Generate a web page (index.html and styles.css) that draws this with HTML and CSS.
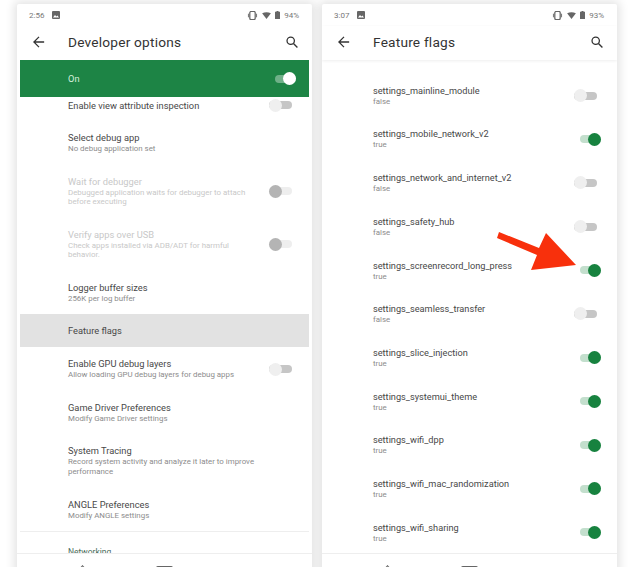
FILE: index.html
```html
<!DOCTYPE html>
<html lang="en">
<head>
    <meta charset="UTF-8">
    <meta name="viewport" content="width=device-width, initial-scale=1.0">
    <title>Developer options and Feature flags</title>
    <link rel="stylesheet" href="styles.css">
</head>
<body>
    <div class="screens">
        <div class="phone">
            <div class="statusbar">
                <span class="clock">2:56</span>
                <svg class="photo-icon" viewBox="0 0 8 8"><rect width="8" height="8" rx="1" fill="#666"/><path d="M1 6.5 3 4l1.4 1.6L5.4 4.6 7 6.5z" fill="#fff"/></svg>
                <span class="status-right">
                    <svg class="vibrate-icon" viewBox="0 0 12 10"><rect x="3" y="0.5" width="6" height="9" rx="1.5" fill="none" stroke="#666" stroke-width="1.4"/><path d="M1.5 3v4M10.5 3v4" stroke="#666"/></svg>
                    <svg class="wifi-icon" viewBox="0 0 10 8"><path d="M0 1.5Q5-1 10 1.5L5 8z" fill="#666"/></svg>
                    <svg class="battery-icon" viewBox="0 0 5 8"><path d="M1.5 0h2v.8H5V8H0V.8h1.5z" fill="#666"/></svg>
                    <span class="pct">94%</span>
                </span>
            </div>
            <div class="appbar">
                <svg class="back-icon" viewBox="0 0 14 14"><path d="M13 7H1.5M7 1 1 7l6 6" fill="none" stroke="#333" stroke-width="1.5"/></svg>
                <h1 class="title">Developer options</h1>
                <svg class="search-icon" viewBox="0 0 14 14"><circle cx="5.5" cy="5.5" r="4.3" fill="none" stroke="#333" stroke-width="1.5"/><path d="m8.7 8.7 4.6 4.6" stroke="#333" stroke-width="1.6"/></svg>
            </div>
            <div class="main-switch">
                <span>On</span>
                <span class="toggle toggle-white"></span>
            </div>
            <div class="list list-dev">
                <div class="row row-first"><div class="texts"><div class="name">Enable view attribute inspection</div></div><span class="toggle toggle-off"></span></div>
                <div class="row"><div class="texts"><div class="name">Select debug app</div><div class="sub">No debug application set</div></div></div>
                <div class="row row-tall disabled"><div class="texts"><div class="name">Wait for debugger</div><div class="sub">Debugged application waits for debugger to attach before executing</div></div><span class="toggle toggle-dim"></span></div>
                <div class="row row-tall disabled"><div class="texts"><div class="name">Verify apps over USB</div><div class="sub">Check apps installed via ADB/ADT for harmful behavior.</div></div><span class="toggle toggle-dim"></span></div>
                <div class="row"><div class="texts"><div class="name">Logger buffer sizes</div><div class="sub">256K per log buffer</div></div></div>
                <div class="row row-flags"><div class="texts"><div class="name">Feature flags</div></div></div>
                <div class="row"><div class="texts"><div class="name">Enable GPU debug layers</div><div class="sub">Allow loading GPU debug layers for debug apps</div></div><span class="toggle toggle-off"></span></div>
                <div class="row"><div class="texts"><div class="name">Game Driver Preferences</div><div class="sub">Modify Game Driver settings</div></div></div>
                <div class="row row-tall"><div class="texts"><div class="name">System Tracing</div><div class="sub">Record system activity and analyze it later to improve performance</div></div></div>
                <div class="row"><div class="texts"><div class="name">ANGLE Preferences</div><div class="sub">Modify ANGLE settings</div></div></div>
                <div class="section-head">Networking</div>
            </div>
            <div class="navbar"><span class="nav-back"></span><span class="nav-square"></span></div>
        </div>

        <div class="phone">
            <div class="statusbar">
                <span class="clock">3:07</span>
                <svg class="photo-icon" viewBox="0 0 8 8"><rect width="8" height="8" rx="1" fill="#666"/><path d="M1 6.5 3 4l1.4 1.6L5.4 4.6 7 6.5z" fill="#fff"/></svg>
                <span class="status-right">
                    <svg class="vibrate-icon" viewBox="0 0 12 10"><rect x="3" y="0.5" width="6" height="9" rx="1.5" fill="none" stroke="#666" stroke-width="1.4"/><path d="M1.5 3v4M10.5 3v4" stroke="#666"/></svg>
                    <svg class="wifi-icon" viewBox="0 0 10 8"><path d="M0 1.5Q5-1 10 1.5L5 8z" fill="#666"/></svg>
                    <svg class="battery-icon" viewBox="0 0 5 8"><path d="M1.5 0h2v.8H5V8H0V.8h1.5z" fill="#666"/></svg>
                    <span class="pct">93%</span>
                </span>
            </div>
            <div class="appbar appbar-shadow">
                <svg class="back-icon" viewBox="0 0 14 14"><path d="M13 7H1.5M7 1 1 7l6 6" fill="none" stroke="#333" stroke-width="1.5"/></svg>
                <h1 class="title">Feature flags</h1>
                <svg class="search-icon" viewBox="0 0 14 14"><circle cx="5.5" cy="5.5" r="4.3" fill="none" stroke="#333" stroke-width="1.5"/><path d="m8.7 8.7 4.6 4.6" stroke="#333" stroke-width="1.6"/></svg>
            </div>
            <div class="list list-flags">
                <div class="flag flag-cut"><div class="texts"><div class="sub">false</div></div></div>
                <div class="flag"><div class="texts"><div class="name">settings_mainline_module</div><div class="sub">false</div></div><span class="toggle toggle-off"></span></div>
                <div class="flag"><div class="texts"><div class="name">settings_mobile_network_v2</div><div class="sub">true</div></div><span class="toggle toggle-on"></span></div>
                <div class="flag"><div class="texts"><div class="name">settings_network_and_internet_v2</div><div class="sub">false</div></div><span class="toggle toggle-off"></span></div>
                <div class="flag"><div class="texts"><div class="name">settings_safety_hub</div><div class="sub">false</div></div><span class="toggle toggle-off"></span></div>
                <div class="flag"><div class="texts"><div class="name">settings_screenrecord_long_press</div><div class="sub">true</div></div><span class="toggle toggle-on"></span></div>
                <div class="flag"><div class="texts"><div class="name">settings_seamless_transfer</div><div class="sub">false</div></div><span class="toggle toggle-off"></span></div>
                <div class="flag"><div class="texts"><div class="name">settings_slice_injection</div><div class="sub">true</div></div><span class="toggle toggle-on"></span></div>
                <div class="flag"><div class="texts"><div class="name">settings_systemui_theme</div><div class="sub">true</div></div><span class="toggle toggle-on"></span></div>
                <div class="flag"><div class="texts"><div class="name">settings_wifi_dpp</div><div class="sub">true</div></div><span class="toggle toggle-on"></span></div>
                <div class="flag"><div class="texts"><div class="name">settings_wifi_mac_randomization</div><div class="sub">true</div></div><span class="toggle toggle-on"></span></div>
                <div class="flag"><div class="texts"><div class="name">settings_wifi_sharing</div><div class="sub">true</div></div><span class="toggle toggle-on"></span></div>
            </div>
            <div class="navbar"><span class="nav-back"></span><span class="nav-square"></span></div>
            <svg class="arrow" viewBox="0 0 84 40"><path d="M1 6 3 0 43 16 50 1 80 33 35 38 41 23z" fill="#f8300c"/></svg>
        </div>
    </div>
</body>
</html>
```

FILE: styles.css
```css
* {
    margin: 0;
    padding: 0;
    box-sizing: border-box;
}

html, body {
    height: 100%;
    overflow: hidden;
}

body {
    background: #fff;
    font-family: 'Roboto', 'Liberation Sans', sans-serif;
    color: #3c3c3c;
}

.screens {
    display: flex;
    gap: 10px;
    height: 567px;
    padding: 4px 0 0 17px;
    overflow: hidden;
}

.phone {
    position: relative;
    flex: none;
    width: 295px;
    height: 600px;
    background: #fff;
    border-radius: 2px;
    box-shadow: 0 0 10px 3px rgba(0,0,0,0.11);
    overflow: hidden;
}

.statusbar {
    display: flex;
    align-items: center;
    height: 22px;
    padding: 0 13px 0 12px;
    font-size: 8px;
    color: #777;
}

.photo-icon {
    width: 8px;
    height: 8px;
    margin-left: 8px;
}

.status-right {
    display: flex;
    align-items: center;
    gap: 4px;
    margin-left: auto;
}

.vibrate-icon {
    width: 11px;
    height: 9px;
}

.wifi-icon {
    width: 9px;
    height: 7px;
}

.battery-icon {
    width: 5px;
    height: 8px;
}

.appbar {
    position: relative;
    z-index: 1;
    display: flex;
    align-items: center;
    height: 34px;
    padding: 0 14px 3px 16px;
    background: #fff;
}

.appbar-shadow {
    box-shadow: 0 1px 3px rgba(0,0,0,0.07);
}

.back-icon {
    width: 12px;
    height: 12px;
}

.title {
    margin-left: 23px;
    font-size: 13.7px;
    font-weight: 400;
    letter-spacing: 0.2px;
    color: #333;
}

.search-icon {
    width: 12px;
    height: 12px;
    margin-left: auto;
}

.main-switch {
    display: flex;
    align-items: center;
    justify-content: space-between;
    height: 37px;
    margin: 0 3px;
    padding: 0 13px 0 48px;
    background: #1d8445;
    font-size: 9.3px;
    color: #d5f0dc;
}

.row {
    display: flex;
    align-items: center;
    justify-content: space-between;
    height: 43.5px;
    margin: 0 3px;
    padding: 0 17px 0 48px;
}

.row-first {
    height: 24px;
    padding-bottom: 8px;
}

.row-tall {
    height: 53.2px;
}

.row-flags {
    height: 33px;
    background: #e2e2e2;
}

.texts {
    max-width: 190px;
}

.name {
    font-size: 9.2px;
    line-height: 11px;
    white-space: nowrap;
    color: #484848;
}

.list-dev .name {
    font-size: 9.3px;
}

.sub {
    margin-top: 1px;
    font-size: 7.9px;
    line-height: 9.5px;
    color: #8c8c8c;
}

.disabled .name,
.disabled .sub {
    color: #c8c8c8;
}

.section-head {
    margin: 0 3px;
    padding: 15px 0 0 48px;
    border-top: 1px solid #eee;
    font-size: 8.5px;
    line-height: 10px;
    color: #4a6b5a;
}

.list-flags {
    margin-top: -8px;
}

.flag {
    display: flex;
    align-items: center;
    justify-content: space-between;
    height: 43.7px;
    padding: 0 16px 0 51px;
}

/* last row scrolled under the app bar, only its value still shows */
.flag-cut {
    height: 21.7px;
    align-items: flex-start;
}

/* switches: track is the span, knob is ::after */
.toggle {
    position: relative;
    display: block;
    flex: none;
    width: 21px;
    height: 8px;
    border-radius: 4px;
}

.toggle::after {
    content: '';
    position: absolute;
    top: -2.5px;
    width: 13px;
    height: 13px;
    border-radius: 50%;
}

.toggle-off {
    width: 23px;
    background: #c6c6c6;
}

.flag .toggle-off {
    margin-right: 4px;
}

.toggle-off::after {
    left: 0;
    background: #efefef;
}

.toggle-on {
    background: #c3dfcd;
}

.toggle-on::after {
    right: 0;
    background: #17823f;
}

.toggle-white {
    background: #6fb088;
}

.toggle-white::after {
    right: 0;
    background: #fff;
}

.toggle-dim {
    width: 23px;
    background: #eee;
}

.toggle-dim::after {
    left: 0;
    background: #b4b4b4;
}

.navbar {
    position: absolute;
    z-index: 2;
    left: 0;
    top: 549px;
    width: 100%;
    height: 51px;
    background: #fff;
    border-top: 1px solid #eee;
}

.nav-square {
    position: absolute;
    left: 139px;
    top: 12px;
    width: 17px;
    height: 14px;
    border: 2px solid #666;
    border-radius: 2px;
}

.nav-back {
    position: absolute;
    left: 61px;
    top: 13px;
    width: 9px;
    height: 9px;
    border-left: 1.5px solid #666;
    border-top: 1.5px solid #666;
    transform: rotate(45deg);
}

.arrow {
    position: absolute;
    z-index: 3;
    left: 174px;
    top: 228px;
    width: 84px;
    height: 40px;
}
```
